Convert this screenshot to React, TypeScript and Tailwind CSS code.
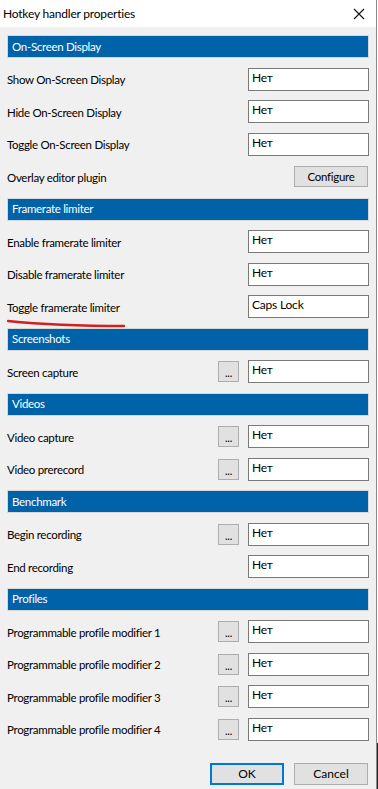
import React from "react";

type Row =
  | { kind: "header"; title: string }
  | { kind: "key"; label: string; value: string; dots?: boolean }
  | { kind: "button"; label: string; action: string };

const rows: Row[] = [
  { kind: "header", title: "On-Screen Display" },
  { kind: "key", label: "Show On-Screen Display", value: "Нет" },
  { kind: "key", label: "Hide On-Screen Display", value: "Нет" },
  { kind: "key", label: "Toggle On-Screen Display", value: "Нет" },
  { kind: "button", label: "Overlay editor plugin", action: "Configure" },
  { kind: "header", title: "Framerate limiter" },
  { kind: "key", label: "Enable framerate limiter", value: "Нет" },
  { kind: "key", label: "Disable framerate limiter", value: "Нет" },
  { kind: "key", label: "Toggle framerate limiter", value: "Caps Lock" },
  { kind: "header", title: "Screenshots" },
  { kind: "key", label: "Screen capture", value: "Нет", dots: true },
  { kind: "header", title: "Videos" },
  { kind: "key", label: "Video capture", value: "Нет", dots: true },
  { kind: "key", label: "Video prerecord", value: "Нет", dots: true },
  { kind: "header", title: "Benchmark" },
  { kind: "key", label: "Begin recording", value: "Нет", dots: true },
  { kind: "key", label: "End recording", value: "Нет" },
  { kind: "header", title: "Profiles" },
  { kind: "key", label: "Programmable profile modifier 1", value: "Нет", dots: true },
  { kind: "key", label: "Programmable profile modifier 2", value: "Нет", dots: true },
  { kind: "key", label: "Programmable profile modifier 3", value: "Нет", dots: true },
  { kind: "key", label: "Programmable profile modifier 4", value: "Нет", dots: true },
];

function HotkeyField({ value }: { value: string }) {
  return (
    <div className="w-[121px] h-[23px] bg-white border border-[#7a7a7a] pl-[3px] leading-[17px] text-[12px] tracking-[-0.2px] text-black">
      {value}
    </div>
  );
}

function DotsButton() {
  return (
    <div className="w-[21px] h-[21px] mr-[9px] bg-[#e1e1e1] border border-[#adadad] flex items-end justify-center pb-[3px] text-[11px] leading-[10px] text-black">
      ...
    </div>
  );
}

export default function App() {
  return (
    <div
      className="w-[378px] h-[789px] flex bg-white text-black"
      style={{ fontFamily: 'Lato, "Noto Sans", "Liberation Sans", sans-serif' }}
    >
      <div className="w-[376px] h-full flex flex-col bg-[#f0f0f0]">
        {/* Title bar */}
        <div className="h-[27px] bg-white flex items-center justify-between pl-[3px] pr-[11px]">
          <span className="text-[12px] tracking-[-0.2px]">Hotkey handler properties</span>
          <svg width="12" height="12" viewBox="0 0 12 12">
            <path d="M1 1 L11 11 M11 1 L1 11" stroke="#111" strokeWidth="1.1" />
          </svg>
        </div>

        {/* Content */}
        <div className="relative ml-[7px] w-[362px] mt-[8px] flex flex-col gap-[9.5px] text-[11.5px] tracking-[-0.3px]">
          {rows.map((row, i) => {
            if (row.kind === "header") {
              return (
                <div
                  key={i}
                  className="h-[23px] bg-[#0063a9] border border-[#d7d7d7] flex items-center pl-[4px] text-white"
                >
                  {row.title}
                </div>
              );
            }
            if (row.kind === "button") {
              return (
                <div key={i} className="h-[23px] flex items-center">
                  <span className="flex-1 pt-[2px]">{row.label}</span>
                  <div className="w-[74px] h-[21px] mr-[1px] bg-[#e1e1e1] border border-[#adadad] flex items-center justify-center">
                    {row.action}
                  </div>
                </div>
              );
            }
            return (
              <div key={i} className="h-[23px] flex items-center">
                <span className="flex-1 pt-[2px]">{row.label}</span>
                {row.dots && <DotsButton />}
                <HotkeyField value={row.value} />
              </div>
            );
          })}

          {/* Red hand-drawn underline */}
          <svg
            className="absolute left-0 top-[282px]"
            width="130"
            height="14"
            viewBox="0 0 130 14"
          >
            <path
              d="M1 4 Q 50 9 117 9"
              stroke="#d41f1f"
              strokeWidth="2.4"
              fill="none"
              strokeLinecap="round"
            />
          </svg>
        </div>

        {/* Footer buttons */}
        <div className="mt-[22px] ml-[210px] flex gap-[10px] text-[12px]">
          <div className="w-[74px] h-[22px] bg-[#e1e1e1] border-2 border-[#0078d7] flex items-center justify-center">
            OK
          </div>
          <div className="w-[74px] h-[22px] bg-[#e1e1e1] border border-[#adadad] flex items-center justify-center">
            Cancel
          </div>
        </div>
      </div>
      <div className="w-[1px] h-full bg-[#8a8a8a]" />
      <div className="w-[1px] h-full flex flex-col">
        <div className="h-[743px] bg-white" />
        <div className="flex-1 bg-[#222]" />
      </div>
    </div>
  );
}
